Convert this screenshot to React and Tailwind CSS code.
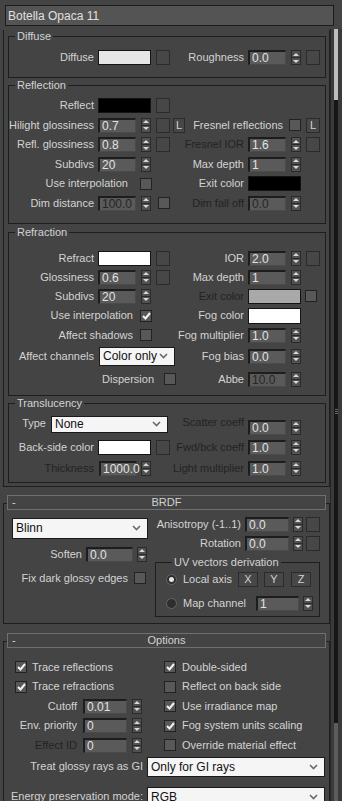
import React from 'react';

const LT = 'text-[#d3d3d3]';
const DIM = 'text-[#232323]';

function Lbl({ w, dim, cls = '', children }) {
  return (
    <div className={`${w} shrink-0 flex justify-end whitespace-nowrap ${dim ? DIM : LT} ${cls}`}>
      <span>{children}</span>
    </div>
  );
}

function Field({ v, w = 'w-[38px]', dim, cls = '' }) {
  return (
    <div
      className={`${w} h-[15px] shrink-0 border-l-2 border-t-2 border-r border-b border-l-[#1d1d1d] border-t-[#1d1d1d] border-r-[#4a4a4a] border-b-[#4a4a4a] bg-[#5a5a5a] pl-[2px] text-[12px] leading-[12px] ${dim ? 'text-[#262626]' : 'text-[#e2e2e2]'} ${cls}`}
    >
      {v}
    </div>
  );
}

function Spin({ cls = '' }) {
  return (
    <div className={`w-[10px] h-[15px] shrink-0 flex flex-col border border-[#2a2a2a] bg-[#505050] ${cls}`}>
      <div className="flex-1 flex items-center justify-center border-b border-[#2a2a2a]">
        <svg width="6" height="3" viewBox="0 0 6 3"><path d="M0 3L3 0L6 3Z" fill="#d8d8d8" /></svg>
      </div>
      <div className="flex-1 flex items-center justify-center">
        <svg width="6" height="3" viewBox="0 0 6 3"><path d="M0 0L6 0L3 3Z" fill="#d8d8d8" /></svg>
      </div>
    </div>
  );
}

function Btn({ w = 'w-[14px]', cls = '', children }) {
  return (
    <div className={`${w} h-[15px] shrink-0 border border-[#2b2b2b] bg-[#474747] flex items-center justify-center text-[11px] ${LT} ${cls}`}>
      {children}
    </div>
  );
}

function Sw({ c, cls = '' }) {
  return <div className={`w-[53px] h-[15px] shrink-0 border border-[#141414] ${c} ${cls}`} />;
}

function Check({ on, cls = '' }) {
  return (
    <div className={`w-[12px] h-[12px] shrink-0 bg-[#585858] border border-[#222] flex items-center justify-center ${cls}`}>
      {on && (
        <svg width="9" height="8" viewBox="0 0 9 8">
          <path d="M1 4L3.5 6.5L8 1" stroke="#f2f2f2" strokeWidth="2" fill="none" />
        </svg>
      )}
    </div>
  );
}

function Radio({ on }) {
  return (
    <div className="w-[11px] h-[11px] shrink-0 rounded-full bg-[#2e2e2e] border border-[#666] flex items-center justify-center">
      {on && <div className="w-[5px] h-[5px] rounded-full bg-[#e4e4e4]" />}
    </div>
  );
}

function Drop({ v, w, h = 'h-[19px]', cls = '' }) {
  return (
    <div className={`${w} ${h} shrink-0 bg-[#f5f5f5] border border-[#1a1a1a] flex items-center pl-[3px] pr-[6px] text-[12px] text-[#111] ${cls}`}>
      <span className="flex-1 truncate">{v}</span>
      <svg width="9" height="6" viewBox="0 0 9 6"><path d="M1 1L4.5 4.5L8 1" stroke="#6a6a6a" strokeWidth="1.6" fill="none" /></svg>
    </div>
  );
}

function Row({ h = 'h-[15px]', cls = '', children }) {
  return <div className={`flex items-center ${h} ${cls}`}>{children}</div>;
}

function Left({ children, cls = '' }) {
  return <div className={`w-[176px] shrink-0 flex items-center ${cls}`}>{children}</div>;
}

function Group({ title, cls = '', children }) {
  return (
    <fieldset className={`border border-[#1e1e1e] ${cls}`}>
      <legend className={`ml-[6px] px-[2px] leading-[13px] ${LT}`}>{title}</legend>
      {children}
    </fieldset>
  );
}

function RollHead({ t }) {
  return (
    <div className={`relative z-10 ml-[4px] w-[319px] h-[15px] border border-[#6f6f6f] bg-[#444] flex items-center ${LT}`}>
      <span className="w-[14px] pl-[4px]">-</span>
      <span className="flex-1 text-center pr-[14px]">{t}</span>
    </div>
  );
}

function RightStd({ label, dim, v, fdim, map }) {
  return (
    <>
      <Lbl w="w-[63px]" cls="pr-[4px]" dim={dim}>{label}</Lbl>
      <Field v={v} dim={fdim} />
      <Spin cls="ml-[5px]" />
      {map && <Btn cls="ml-[5px]" />}
    </>
  );
}

function LeftStd({ label, dim, v, fdim, map }) {
  return (
    <>
      <Lbl w="w-[89px]" cls="pr-[4px]" dim={dim}>{label}</Lbl>
      <Field v={v} dim={fdim} />
      <Spin cls="ml-[5px]" />
      {map && <Btn cls="ml-[5px]" />}
    </>
  );
}

export default function App() {
  return (
    <div className="w-[342px] h-[801px] overflow-hidden bg-[#444444] font-['Liberation_Sans',Arial,sans-serif] text-[11px]">
      <div className="ml-[5px] mt-[5px] w-[329px] h-[21px] border border-[#1c1c1c] bg-[#545454] pl-[2px] flex items-center text-[12px] text-[#e0e0e0]">
        Botella Opaca 11
      </div>

      <div className="mt-[3px] flex">
        <div className="w-[330px] pl-[3px]">
          {/* Basic parameters rollout (scrolled) */}
          <div className="w-[327px] border-l border-r border-b border-[#1e1e1e] pl-[4px] pr-[3px] pb-[3px]">
            <Group title="Diffuse" cls="mt-[1px] pt-[7px] pb-[12px]">
              <Row>
                <Left>
                  <Lbl w="w-[89px]" cls="pr-[4px]">Diffuse</Lbl>
                  <Sw c="bg-[#e6e6e6]" />
                  <Btn cls="ml-[5px]" />
                </Left>
                <RightStd label="Roughness" v="0.0" map />
              </Row>
            </Group>

            <Group title="Reflection" cls="mt-[1px] pt-[6px] pb-[12px]">
              <div className="flex flex-col gap-[4.5px]">
                <Row>
                  <Left>
                    <Lbl w="w-[89px]" cls="pr-[4px]">Reflect</Lbl>
                    <Sw c="bg-black" />
                    <Btn cls="ml-[5px]" />
                  </Left>
                </Row>
                <Row>
                  <Left>
                    <LeftStd label="Hilight glossiness" v="0.7" map />
                    <Btn w="w-[12px]" cls="ml-[3px]">L</Btn>
                  </Left>
                  <Lbl w="w-[104px]" cls="pr-[6px]">Fresnel reflections</Lbl>
                  <Check />
                  <Btn cls="ml-[5px]">L</Btn>
                </Row>
                <Row>
                  <Left><LeftStd label="Refl. glossiness" v="0.8" map /></Left>
                  <RightStd label="Fresnel IOR" dim v="1.6" map />
                </Row>
                <Row>
                  <Left><LeftStd label="Subdivs" v="20" /></Left>
                  <RightStd label="Max depth" v="1" />
                </Row>
                <Row>
                  <Left>
                    <Lbl w="w-[131px]" cls="pr-[12px]">Use interpolation</Lbl>
                    <Check />
                  </Left>
                  <Lbl w="w-[63px]" cls="pr-[4px]">Exit color</Lbl>
                  <Sw c="bg-black" />
                </Row>
                <Row>
                  <Left>
                    <LeftStd label="Dim distance" v="100.0" fdim />
                    <Check cls="ml-[7px]" />
                  </Left>
                  <RightStd label="Dim fall off" dim v="0.0" fdim />
                </Row>
              </div>
            </Group>

            <Group title="Refraction" cls="mt-[2px] pt-[12px] pb-[8px]">
              <div className="flex flex-col gap-[4px]">
                <Row>
                  <Left>
                    <Lbl w="w-[89px]" cls="pr-[4px]">Refract</Lbl>
                    <Sw c="bg-white" />
                    <Btn cls="ml-[5px]" />
                  </Left>
                  <RightStd label="IOR" v="2.0" map />
                </Row>
                <Row>
                  <Left><LeftStd label="Glossiness" v="0.6" map /></Left>
                  <RightStd label="Max depth" v="1" />
                </Row>
                <Row>
                  <Left><LeftStd label="Subdivs" v="20" /></Left>
                  <Lbl w="w-[63px]" cls="pr-[4px]" dim>Exit color</Lbl>
                  <Sw c="bg-[#a9a9a9]" />
                  <Check cls="ml-[4px]" />
                </Row>
                <Row h="h-[16px]">
                  <Left>
                    <Lbl w="w-[131px]" cls="pr-[7px]">Use interpolation</Lbl>
                    <Check on />
                  </Left>
                  <Lbl w="w-[63px]" cls="pr-[4px]">Fog color</Lbl>
                  <Sw c="bg-white" cls="h-[16px]" />
                </Row>
                <Row>
                  <Left>
                    <Lbl w="w-[131px]" cls="pr-[7px]">Affect shadows</Lbl>
                    <Check />
                  </Left>
                  <RightStd label="Fog multiplier" v="1.0" />
                </Row>
                <Row h="h-[19px]">
                  <Left>
                    <Lbl w="w-[90px]" cls="pr-[5px]">Affect channels</Lbl>
                    <Drop v="Color only" w="w-[76px]" />
                  </Left>
                  <RightStd label="Fog bias" v="0.0" />
                </Row>
                <Row cls="mt-[2px]">
                  <Left>
                    <Lbl w="w-[155px]" cls="pr-[10px]">Dispersion</Lbl>
                    <Check />
                  </Left>
                  <RightStd label="Abbe" v="10.0" fdim />
                </Row>
              </div>
            </Group>

            <Group title="Translucency" cls="mt-[1px] pt-[6px] pb-[6px]">
              <div className="flex flex-col">
                <div className="flex items-start h-[17px]">
                  <Left cls="items-start">
                    <Lbl w="w-[42px]" cls="pr-[5px] leading-[13px] mt-[1px]">Type</Lbl>
                    <Drop v="None" w="w-[117px]" h="h-[17px]" cls="text-[11px]" />
                  </Left>
                  <Lbl w="w-[63px]" cls="pr-[4px] leading-[13px]" dim>Scatter coeff</Lbl>
                  <Field v="0.0" fdim cls="mt-[4px]" />
                  <Spin cls="ml-[5px] mt-[4px]" />
                </div>
                <Row cls="mt-[7px]">
                  <Left>
                    <Lbl w="w-[89px]" cls="pr-[4px]">Back-side color</Lbl>
                    <Sw c="bg-white" />
                    <Btn cls="ml-[5px]" />
                  </Left>
                  <RightStd label="Fwd/bck coeff" dim v="1.0" />
                </Row>
                <Row cls="mt-[6px]">
                  <Left>
                    <Lbl w="w-[90px]" cls="pr-[5px]" dim>Thickness</Lbl>
                    <Field v="1000.0" />
                    <Spin cls="ml-[4px]" />
                  </Left>
                  <RightStd label="Light multiplier" dim v="1.0" />
                </Row>
              </div>
            </Group>
          </div>

          {/* BRDF rollout */}
          <div className="mt-[8px]">
            <RollHead t="BRDF" />
            <div className="-mt-[7px] w-[327px] border border-[#1e1e1e] pl-[8px] pt-[14px] pb-[6px] flex">
              <div className="w-[136px] shrink-0 flex flex-col">
                <Drop v="Blinn" w="w-[136px]" h="h-[21px]" />
                <Row cls="mt-[8px]">
                  <Lbl w="w-[74px]" cls="pr-[4px]">Soften</Lbl>
                  <Field v="0.0" w="w-[47px]" />
                  <Spin cls="ml-[4px]" />
                </Row>
                <Row cls="mt-[9px]">
                  <Lbl w="w-[122px]" cls="pr-[6px]">Fix dark glossy edges</Lbl>
                  <Check />
                </Row>
              </div>
              <div className="ml-[7px] w-[165px] shrink-0 flex flex-col">
                <Row cls="-mt-[1px]">
                  <Lbl w="w-[90px]" cls="pr-[4px]">Anisotropy (-1..1)</Lbl>
                  <Field v="0.0" w="w-[44px]" />
                  <Spin cls="ml-[4px]" />
                  <Btn cls="ml-[3px]" />
                </Row>
                <Row cls="mt-[4px]">
                  <Lbl w="w-[90px]" cls="pr-[4px]">Rotation</Lbl>
                  <Field v="0.0" w="w-[44px]" />
                  <Spin cls="ml-[4px]" />
                  <Btn cls="ml-[3px]" />
                </Row>
                <Group title="UV vectors derivation" cls="mt-[5px] pt-[3px] pb-[5px] pl-[10px]">
                  <Row>
                    <Radio on />
                    <span className={`ml-[6px] w-[55px] ${LT}`}>Local axis</span>
                    <Btn w="w-[20px]">X</Btn>
                    <Btn w="w-[20px]" cls="ml-[6px]">Y</Btn>
                    <Btn w="w-[20px]" cls="ml-[7px]">Z</Btn>
                  </Row>
                  <Row cls="mt-[9px]">
                    <Radio />
                    <span className={`ml-[6px] w-[73px] ${LT}`}>Map channel</span>
                    <Field v="1" w="w-[43px]" />
                    <Spin cls="ml-[4px]" />
                  </Row>
                </Group>
              </div>
            </div>
          </div>

          {/* Options rollout */}
          <div className="mt-[9px]">
            <RollHead t="Options" />
            <div className="-mt-[7px] w-[327px] border border-[#1e1e1e] pl-[8px] pt-[18px] pb-[20px]">
              <div className="flex flex-col gap-[4.5px] pl-[3px]">
                <Row>
                  <div className="w-[149px] shrink-0 flex items-center">
                    <Check on />
                    <span className={`ml-[5px] ${LT}`}>Trace reflections</span>
                  </div>
                  <Check on />
                  <span className={`ml-[6px] ${LT}`}>Double-sided</span>
                </Row>
                <Row>
                  <div className="w-[149px] shrink-0 flex items-center">
                    <Check on />
                    <span className={`ml-[5px] ${LT}`}>Trace refractions</span>
                  </div>
                  <Check />
                  <span className={`ml-[6px] ${LT}`}>Reflect on back side</span>
                </Row>
                <Row>
                  <div className="w-[149px] shrink-0 flex items-center">
                    <Lbl w="w-[68px]" cls="pr-[6px]">Cutoff</Lbl>
                    <Field v="0.01" w="w-[44px]" />
                    <Spin cls="ml-[5px]" />
                  </div>
                  <Check on />
                  <span className={`ml-[6px] ${LT}`}>Use irradiance map</span>
                </Row>
                <Row>
                  <div className="w-[149px] shrink-0 flex items-center">
                    <Lbl w="w-[68px]" cls="pr-[6px]">Env. priority</Lbl>
                    <Field v="0" w="w-[44px]" />
                    <Spin cls="ml-[5px]" />
                  </div>
                  <Check on />
                  <span className={`ml-[6px] ${LT}`}>Fog system units scaling</span>
                </Row>
                <Row>
                  <div className="w-[149px] shrink-0 flex items-center">
                    <Lbl w="w-[68px]" cls="pr-[6px]" dim>Effect ID</Lbl>
                    <Field v="0" w="w-[44px]" fdim />
                    <Spin cls="ml-[5px]" />
                  </div>
                  <Check />
                  <span className={`ml-[6px] ${LT}`}>Override material effect</span>
                </Row>
              </div>
              <Row h="h-[20px]" cls="mt-[4px]">
                <Lbl w="w-[135px]" cls="pr-[4px]">Treat glossy rays as GI</Lbl>
                <Drop v="Only for GI rays" w="w-[178px]" h="h-[20px]" />
              </Row>
              <Row h="h-[20px]" cls="mt-[10px]">
                <Lbl w="w-[135px]" cls="pr-[4px]">Energy preservation mode:</Lbl>
                <Drop v="RGB" w="w-[178px]" h="h-[20px]" />
              </Row>
            </div>
          </div>
        </div>

        {/* scrollbar */}
        <div className="w-[12px] shrink-0 flex self-stretch">
          <div className="w-[4px] bg-[#3a3a3a] border-l border-[#262626]" />
          <div className="w-[4px] flex flex-col">
            <div className="h-[71px] bg-[#bdbdbd]" />
            <div className="h-[623px] bg-[#161616] flex flex-col items-center justify-center gap-[1px]">
              <div className="w-[3px] h-px bg-[#6a6a6a]" />
              <div className="w-[3px] h-px bg-[#6a6a6a]" />
              <div className="w-[3px] h-px bg-[#6a6a6a]" />
            </div>
            <div className="flex-1 bg-[#5c5c5c]" />
          </div>
          <div className="w-[4px] bg-[#3a3a3a]" />
        </div>
      </div>
    </div>
  );
}
